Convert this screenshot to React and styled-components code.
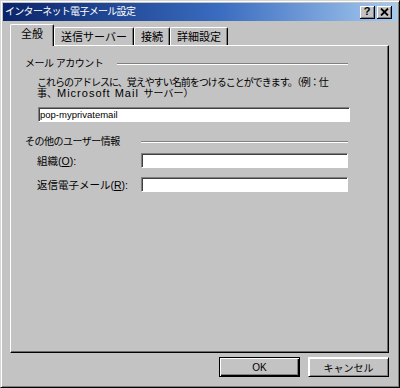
import React from 'react'
import styled, { createGlobalStyle } from 'styled-components'

const GlobalStyle = createGlobalStyle`
  html, body {
    margin: 0;
    padding: 0;
    background: #c3c3c3;
  }
  * {
    box-sizing: border-box;
  }
`

const FONT = `"Liberation Sans", "Noto Sans CJK JP", sans-serif`

function App() {
  return (
    <>
      <GlobalStyle />
      <Window>
        <TitleBar>
          <Title>インターネット電子メール設定</Title>
          <CaptionButton>
            <HelpMark>?</HelpMark>
          </CaptionButton>
          <CaptionButton $close>
            <svg width="9" height="8" viewBox="0 0 9 8">
              <path d="M1 0.5 L8 7.5 M8 0.5 L1 7.5" stroke="#000" strokeWidth="1.8" />
            </svg>
          </CaptionButton>
        </TitleBar>

        <Body>
          <TabStrip>
            <Tab $active>全般</Tab>
            <Tab>送信サーバー</Tab>
            <Tab>接続</Tab>
            <Tab>詳細設定</Tab>
          </TabStrip>

          <Panel>
            <GroupHeader>
              <GroupLabel>メール アカウント</GroupLabel>
              <Etch $gap={14} />
            </GroupHeader>
            <Description>
              これらのアドレスに、覚えやすい名前をつけることができます。（例：仕
              <br />
              <Loose>事、<Latin>Microsoft Mail</Latin> サーバー）</Loose>
            </Description>
            <AccountField>
              <FieldText>pop-myprivatemail</FieldText>
            </AccountField>

            <GroupHeader $top={14}>
              <GroupLabel>その他のユーザー情報</GroupLabel>
              <Etch $gap={21} />
            </GroupHeader>
            <FormRow $top={5}>
              <RowLabel>組織(<u>O</u>):</RowLabel>
              <Field />
            </FormRow>
            <FormRow $top={9}>
              <RowLabel>返信電子メール(<u>R</u>):</RowLabel>
              <Field />
            </FormRow>
          </Panel>

          <Footer>
            <Button $default>OK</Button>
            <Button>キャンセル</Button>
          </Footer>
        </Body>
      </Window>
    </>
  )
}

export default App

const Window = styled.div`
  width: 400px;
  height: 388px;
  background: #c3c3c3;
  border-top: 1px solid #d6d6d6;
  border-left: 1px solid #d6d6d6;
  border-right: 1px solid #000;
  border-bottom: 1px solid #000;
  box-shadow: inset 1px 1px #fff, inset -1px -1px #808080;
  padding: 2px;
  display: flex;
  flex-direction: column;
  font-family: ${FONT};
  color: #000;
`

const TitleBar = styled.div`
  height: 18px;
  display: flex;
  align-items: center;
  padding: 0 5px 0 2px;
  background: linear-gradient(to right, #0a246a 0%, #3a6cc0 55%, #a6caf0 100%);
`

const Title = styled.div`
  flex: 1;
  color: #fff;
  font-size: 10px;
  letter-spacing: -0.7px;
  line-height: 18px;
  white-space: nowrap;
`

const CaptionButton = styled.div`
  width: 15px;
  height: 13px;
  margin-left: ${props => props.$close ? '2px' : '0'};
  background: #c3c3c3;
  box-shadow: inset -1px -1px #000, inset 1px 1px #fff, inset -2px -2px #808080;
  display: flex;
  align-items: center;
  justify-content: center;
  padding: 0 1px 1px 0;
`

const HelpMark = styled.span`
  font-family: "Liberation Sans", sans-serif;
  font-weight: bold;
  font-size: 11px;
  line-height: 11px;
`

const Body = styled.div`
  flex: 1;
  display: flex;
  flex-direction: column;
  padding: 3px 8px 8px 7px;
`

const TabStrip = styled.div`
  height: 21px;
  display: flex;
  align-items: flex-end;
  position: relative;
  z-index: 1;
`

const Tab = styled.div`
  height: ${props => props.$active ? '22px' : '18px'};
  padding: ${props => props.$active ? '0 10px' : '0 6px'};
  margin-bottom: ${props => props.$active ? '-1px' : '0'};
  background: #c3c3c3;
  font-size: 11px;
  line-height: ${props => props.$active ? '19px' : '18px'};
  white-space: nowrap;
  border-radius: 2px 2px 0 0;
  border-top: 1px solid #fff;
  border-left: 1px solid #fff;
  border-right: 1px solid #000;
  box-shadow: inset -1px 0 #808080;
`

const Panel = styled.div`
  flex: 1;
  display: flex;
  flex-direction: column;
  padding: 12px 40px 0 14px;
  border-top: 1px solid #fff;
  border-left: 1px solid #fff;
  border-right: 1px solid #000;
  border-bottom: 1px solid #000;
  box-shadow: inset -1px -1px #6a6a6a;
`

const GroupHeader = styled.div`
  display: flex;
  align-items: center;
  height: 12px;
  margin-top: ${props => props.$top || 0}px;
`

const GroupLabel = styled.span`
  font-size: 10px;
  letter-spacing: -0.5px;
  line-height: 12px;
  white-space: nowrap;
`

const Etch = styled.div`
  flex: 1;
  height: 2px;
  margin-left: ${props => props.$gap}px;
  border-top: 1px solid #808080;
  border-bottom: 1px solid #fff;
`

const Description = styled.div`
  margin: 7px 0 0 12px;
  font-size: 10px;
  letter-spacing: -1px;
  line-height: 11px;
  white-space: nowrap;
`

const Loose = styled.span`
  letter-spacing: 0;
`

const Latin = styled.span`
  font-size: 11px;
  letter-spacing: 1px;
  margin-right: 2px;
`

const Field = styled.div`
  flex: 1;
  height: 15px;
  background: #fff;
  border-top: 1px solid #808080;
  border-left: 1px solid #808080;
  border-bottom: 1px solid #fff;
  border-right: 1px solid #fff;
  box-shadow: inset 1px 1px #404040;
  display: flex;
  align-items: center;
`

const AccountField = styled(Field)`
  flex: none;
  margin: 8px -2px 0 13px;
`

const FieldText = styled.span`
  font-size: 9.5px;
  line-height: 13px;
  padding-left: 1px;
`

const FormRow = styled.div`
  display: flex;
  align-items: center;
  margin: ${props => props.$top}px 0 0 12px;
`

const RowLabel = styled.span`
  width: 104px;
  font-size: 10.5px;
  white-space: nowrap;

  u {
    text-underline-offset: 1px;
  }
`

const Footer = styled.div`
  display: flex;
  justify-content: flex-end;
  gap: 8px;
  margin-top: 4px;
`

const Button = styled.div`
  width: 81px;
  height: 20px;
  display: flex;
  align-items: center;
  justify-content: center;
  font-size: 10px;
  background: #c3c3c3;
  border: 1px solid ${props => props.$default ? '#000' : '#c3c3c3'};
  box-shadow: ${props => props.$default
    ? 'inset 1px 1px #fff, inset -1px -1px #000, inset -2px -2px #808080'
    : 'inset 1px 1px #fff, inset -1px -1px #808080'};
  ${props => !props.$default && 'border-color: #fff #000 #000 #fff;'}
`
